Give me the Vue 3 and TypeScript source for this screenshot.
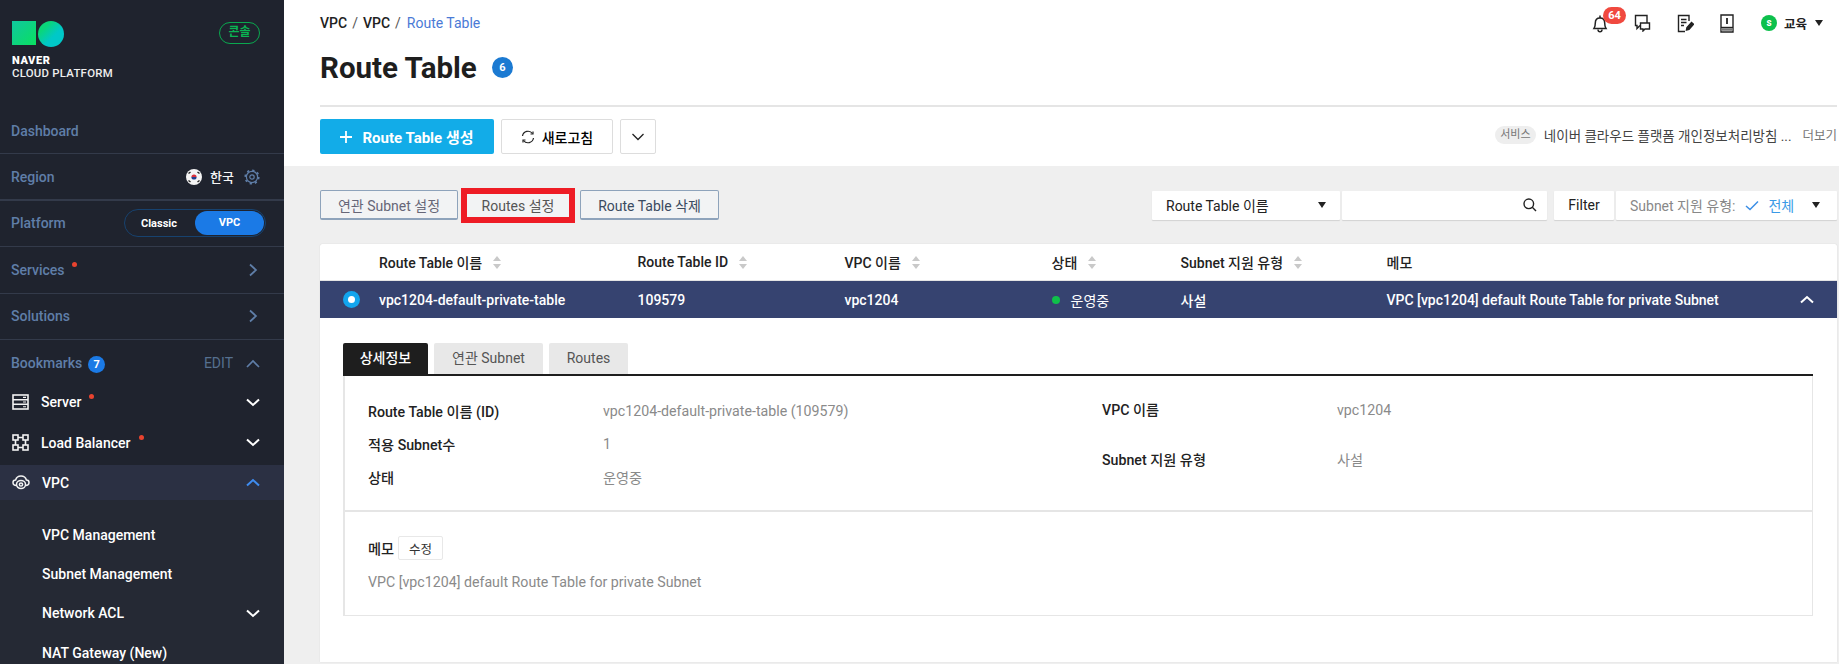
<script setup lang="ts">
interface Col { label: string; sort: boolean }
const cols: Col[] = [
  { label: 'Route Table 이름', sort: true },
  { label: 'Route Table ID', sort: true },
  { label: 'VPC 이름', sort: true },
  { label: '상태', sort: true },
  { label: 'Subnet 지원 유형', sort: true },
  { label: '메모', sort: false },
]
const subs: string[] = ['VPC Management', 'Subnet Management']
</script>

<template>
  <div class="page">
    <aside class="side">
      <div class="brand">
        <div>
          <div class="logo"><i class="sq"></i><i class="ci"></i></div>
          <div class="naver">NAVER</div>
          <div class="ncp">CLOUD PLATFORM</div>
        </div>
        <span class="console">콘솔</span>
      </div>
      <div class="row first"><span class="ttl">Dashboard</span></div>
      <div class="row thick">
        <span class="ttl">Region</span>
        <span class="region">
          <svg width="16" height="16" viewBox="0 0 16 16"><circle cx="8" cy="8" r="8" fill="#f4f4f4"/><path d="M5.400 8a2.600 2.600 0 0 1 5.200 0z" fill="#d8313c"/><path d="M5.400 8a2.600 2.600 0 0 0 5.200 0z" fill="#20408f"/><path d="M2.500 4.500l2 -1.500M2.500 11.500l2 1.500M13.500 4.500l-2 -1.500M13.500 11.500l-2 1.500" stroke="#222" stroke-width="1.400"/></svg>
          <b>한국</b>
          <svg width="16" height="16" viewBox="0 0 16 16" fill="none" stroke="#5f7ea8"><circle cx="8" cy="8" r="5.600" stroke-width="1.200"/><circle cx="8" cy="8" r="6.800" stroke-width="1.600" stroke-dasharray="2.300 3.040"/><circle cx="8" cy="8" r="2.200" stroke-width="1.200"/></svg>
        </span>
      </div>
      <div class="row">
        <span class="ttl">Platform</span>
        <span class="toggle"><span class="tg-off">Classic</span><span class="tg-on">VPC</span></span>
      </div>
      <div class="row">
        <span class="ttl">Services<i class="dot d-s"></i></span>
        <svg class="chev" width="10" height="14" viewBox="0 0 10 14" fill="none" stroke="#5f7ea8" stroke-width="1.700"><path d="M2 1.500L8 7l-6 5.500"/></svg>
      </div>
      <div class="row">
        <span class="ttl">Solutions</span>
        <svg class="chev" width="10" height="14" viewBox="0 0 10 14" fill="none" stroke="#5f7ea8" stroke-width="1.700"><path d="M2 1.500L8 7l-6 5.500"/></svg>
      </div>
      <div class="bm">
        <span class="ttl">Bookmarks</span><span class="bm-n">7</span>
        <span class="edit">EDIT</span>
        <svg width="14" height="9" viewBox="0 0 14 9" fill="none" stroke="#5f7ea8" stroke-width="1.700"><path d="M1 8l6-6 6 6"/></svg>
      </div>
      <div class="item it-server">
        <svg width="17" height="16" viewBox="0 0 17 16" fill="none" stroke="#f2f2f2" stroke-width="1.600"><rect x="1" y="1" width="15" height="14"/><path d="M1 5.700h15M1 10.300h15"/><path d="M11 3.400h3M11 8h3M11 12.700h3" stroke-width="1.100"/></svg>
        <span>Server<i class="dot d-a"></i></span>
        <svg class="ch" width="14" height="9" viewBox="0 0 14 9" fill="none" stroke="#fff" stroke-width="2"><path d="M1 1.500l6 5.500 6-5.500"/></svg>
      </div>
      <div class="item it-lb">
        <svg width="17" height="17" viewBox="0 0 17 17" fill="none" stroke="#f2f2f2" stroke-width="1.600"><rect x="1" y="1" width="5" height="5"/><rect x="11" y="1" width="5" height="5"/><rect x="1" y="11" width="5" height="5"/><rect x="11" y="11" width="5" height="5"/><path d="M6 3.500h5M6 13.500h5M3.500 6v5M13.500 6v5"/></svg>
        <span>Load Balancer<i class="dot d-b"></i></span>
        <svg class="ch" width="14" height="9" viewBox="0 0 14 9" fill="none" stroke="#fff" stroke-width="2"><path d="M1 1.500l6 5.500 6-5.500"/></svg>
      </div>
      <div class="item vpc">
        <svg width="18" height="15" viewBox="0 0 18 15" fill="none" stroke="#f2f2f2" stroke-width="1.500"><path d="M4.500 10.500C2 10.500 1 9 1 7.500 1 6 2.200 5 3.600 5 4.300 2.500 6.300 1 9 1s4.700 1.500 5.400 4c1.400 0 2.600 1 2.600 2.500s-1 3-3.500 3"/><ellipse cx="9" cy="9.500" rx="4.500" ry="4"/><circle cx="9" cy="9.500" r="1.600"/></svg>
        <span>VPC</span>
        <svg class="ch" width="14" height="9" viewBox="0 0 14 9" fill="none" stroke="#3f8cf0" stroke-width="2"><path d="M1 7.500l6-5.500 6 5.500"/></svg>
      </div>
      <div class="subs">
        <div v-for="s in subs" :key="s" class="sub">{{ s }}</div>
        <div class="sub">Network ACL
          <svg class="ch" width="14" height="9" viewBox="0 0 14 9" fill="none" stroke="#fff" stroke-width="2"><path d="M1 1.500l6 5.500 6-5.500"/></svg>
        </div>
        <div class="sub">NAT Gateway (New)</div>
      </div>
    </aside>

    <main class="main">
      <section class="head">
        <div class="top">
          <div class="crumb"><b>VPC</b><em>/</em><b>VPC</b><em>/</em><span>Route Table</span></div>
          <div class="tools">
            <span class="bell">
              <svg width="16" height="19" viewBox="0 0 16 19" fill="none" stroke="#222" stroke-width="1.500"><path d="M2 14.500c1-1.500 1.300-3 1.300-5.500 0-3 1.900-5 4.700-5s4.700 2 4.700 5c0 2.500.3 4 1.300 5.500z"/><path d="M8 1.500v2.500M6 15.500c0 1.500 1 2.300 2 2.300s2-.8 2-2.300"/></svg>
              <i class="bell-n">64</i>
            </span>
            <svg width="17" height="18" viewBox="0 0 17 18" fill="none" stroke="#222" stroke-width="1.400"><path d="M13 9V1.500H1.500v10H3v3l3-3"/><path d="M6.500 9h9v6h-4.500l-2 2v-2H6.500z"/></svg>
            <svg width="17" height="19" viewBox="0 0 17 19" fill="none" stroke="#222" stroke-width="1.400"><path d="M12 7V1.500H1.500v16H8"/><path d="M4 5.500h5.500M4 8.500h5.500M4 11.500h3"/><path d="M9.500 16l.5-2.500 4.500-5 2 1.800-4.500 5z" fill="#222"/></svg>
            <svg width="14" height="19" viewBox="0 0 14 19" fill="none" stroke="#222" stroke-width="1.400"><path d="M1 1h12v17H1z"/><path d="M1 13.500h12"/><path d="M1 15.500h12" stroke-width="2.500" stroke="#777"/><path d="M7 4v6" stroke-width="1.800"/></svg>
            <span class="user"><i class="s">s</i><b>교육</b><i class="caret dk"></i></span>
          </div>
        </div>
        <div class="title"><h1>Route Table</h1><span class="count">6</span></div>
        <div class="acts">
          <button class="b-create">
            <svg width="12" height="12" viewBox="0 0 12 12" stroke="#fff" stroke-width="1.800"><path d="M6 0v12M0 6h12"/></svg>
            Route Table 생성
          </button>
          <button class="b-refresh">
            <svg width="14" height="14" viewBox="0 0 14 14" fill="none" stroke="#222" stroke-width="1.200"><path d="M1.500 6A5.600 5.600 0 0 1 11.500 3.500M12.500 8A5.600 5.600 0 0 1 2.500 10.500"/><path d="M9.500 4h2.500V1.500M4.500 10H2v2.500"/></svg>
            새로고침
          </button>
          <button class="b-more">
            <svg width="14" height="8" viewBox="0 0 14 8" fill="none" stroke="#222" stroke-width="1.300"><path d="M1.500 1l5.500 5.500L12.500 1"/></svg>
          </button>
          <div class="notice"><span class="pill">서비스</span><span class="ntxt">네이버 클라우드 플랫폼 개인정보처리방침 ...</span><span class="nmore">더보기</span></div>
        </div>
      </section>

      <section class="body">
        <div class="bar">
          <button class="b-ol dim">연관 Subnet 설정</button>
          <button class="b-routes">Routes 설정</button>
          <button class="b-ol">Route Table 삭제</button>
          <div class="search">
            <div class="sel">Route Table 이름<i class="caret dk"></i></div>
            <div class="inp">
              <svg width="14" height="14" viewBox="0 0 14 14" fill="none" stroke="#222" stroke-width="1.400"><circle cx="5.800" cy="5.800" r="4.800"/><path d="M9.300 9.300L13 13"/></svg>
            </div>
            <div class="fil">Filter</div>
            <div class="fsel"><span class="fl">Subnet 지원 유형:</span>
              <svg width="14" height="11" viewBox="0 0 14 11" fill="none" stroke="#3a8ee6" stroke-width="1.500"><path d="M1 6l4 3.500L13 1.500"/></svg>
              <span class="fv">전체</span><i class="caret dk"></i></div>
          </div>
        </div>

        <div class="card">
          <div class="thead">
            <span></span>
            <span v-for="c in cols" :key="c.label" class="th">{{ c.label }}
              <svg v-if="c.sort" width="10" height="13" viewBox="0 0 10 13" fill="#c9c9c9"><path d="M5 0l4 5H1zM5 13l4-5H1z"/></svg>
            </span>
          </div>
          <div class="tr">
            <span class="radio"><i></i></span>
            <span>vpc1204-default-private-table</span>
            <span>109579</span>
            <span>vpc1204</span>
            <span class="st"><i></i>운영중</span>
            <span>사설</span>
            <span class="memo">VPC [vpc1204] default Route Table for private Subnet
              <svg width="14" height="9" viewBox="0 0 14 9" fill="none" stroke="#fff" stroke-width="2"><path d="M1 7.500l6-5.500 6 5.500"/></svg>
            </span>
          </div>
          <div class="detail">
            <div class="tabs">
              <span class="tab on">상세정보</span>
              <span class="tab t2">연관 Subnet</span>
              <span class="tab t3">Routes</span>
            </div>
            <div class="panel">
              <div class="info">
                <div class="ic ic-l">
                  <div class="kv"><b>Route Table 이름 (ID)</b><span>vpc1204-default-private-table (109579)</span></div>
                  <div class="kv"><b>적용 Subnet수</b><span>1</span></div>
                  <div class="kv"><b>상태</b><span>운영중</span></div>
                </div>
                <div class="ic ic-r">
                  <div class="kv2"><b>VPC 이름</b><span>vpc1204</span></div>
                  <div class="kv2"><b>Subnet 지원 유형</b><span>사설</span></div>
                </div>
              </div>
              <div class="mm">
                <div class="mm-h"><b>메모</b><button>수정</button></div>
                <p>VPC [vpc1204] default Route Table for private Subnet</p>
              </div>
            </div>
          </div>
        </div>
      </section>
    </main>
  </div>
</template>

<style>
html, body { margin: 0; height: 100%; overflow: hidden; }
</style>

<style scoped>
* { box-sizing: border-box; }
.page { display: flex; width: 1839px; height: 664px; overflow: hidden; font-family: Roboto, "Noto Sans CJK KR", sans-serif; font-size: 14px; color: #222; }
.side { width: 284px; flex: none; background: #1f232e; color: #fff; height: 664px; overflow: hidden; }
.brand { height: 108px; padding: 21px 24px 0 12px; display: flex; justify-content: space-between; align-items: flex-start; }
.logo { display: flex; gap: 2px; height: 26px; margin-bottom: 7px; }
.sq { width: 24px; height: 24px; background: linear-gradient(135deg, #10c7a0, #0ae060); }
.ci { width: 26px; height: 26px; border-radius: 50%; background: linear-gradient(135deg, #0ad67a 25%, #00c8c8 60%); }
.naver { font-size: 11px; font-weight: 900; line-height: 13px; letter-spacing: .6px; }
.ncp { font-size: 11.400px; font-weight: 500; line-height: 12px; letter-spacing: .25px; color: #eee; }
.console { width: 41px; height: 22px; margin-top: 1px; border: 1.500px solid #0aa84f; border-radius: 11px; color: #0ab553; font-size: 12px; font-weight: 700; line-height: 19px; text-align: center; }
.row { height: 46.500px; border-bottom: 1px solid #333a4a; padding: 0 24px 0 11px; display: flex; align-items: center; justify-content: space-between; }
.row.first { height: 46px; }
.row.thick { border-bottom-width: 2px; padding-top: 1px; }
.ttl { color: #5f7ea8; font-size: 14px; font-weight: 500; position: relative; }
.region { display: flex; align-items: center; font-size: 13px; }
.region b { font-weight: 500; margin: 0 10px 0 8px; color: #f5f5f5; }
.toggle { width: 142px; height: 28px; margin-right: -6px; border: 1px solid #17426f; border-radius: 14px; display: flex; align-items: center; padding: 1px; font-size: 11px; font-weight: 700; }
.tg-off { flex: 1; text-align: center; padding-right: 3px; }
.tg-on { width: 69px; height: 24px; border-radius: 12px; background: #1b7ae6; text-align: center; line-height: 24px; }
.chev { margin-right: 2px; }
.dot { position: absolute; width: 5px; height: 5px; border-radius: 50%; background: #e8432f; }
.d-s { left: 61px; top: 0px; }
.d-a { left: 48px; top: 0; }
.d-b { left: 98px; top: 0; }
.bm { height: 42px; padding: 4px 24px 0 11px; display: flex; align-items: center; }
.bm-n { width: 17px; height: 17px; border-radius: 50%; background: #1b7ae6; font-size: 11px; font-weight: 700; line-height: 17px; text-align: center; margin-left: 6px; margin-top: 2px; }
.edit { margin-left: auto; margin-right: 13px; color: #56708f; font-size: 14px; }
.item { display: flex; align-items: center; padding: 0 24px 0 12px; gap: 12px; font-size: 14px; font-weight: 500; }
.item span { position: relative; }
.item .ch { margin-left: auto; }
.it-server { height: 40px; }
.it-lb { height: 41px; }
.vpc { height: 35px; margin-top: 2px; background: #2b3043; }
.subs { background: #252934; height: 210px; padding-top: 15px; font-weight: 500; }
.sub { height: 39.300px; display: flex; align-items: center; padding: 0 24px 0 42px; font-size: 14px; }
.sub .ch { margin-left: auto; }

.main { flex: 1; min-width: 0; background: #efefef; }
.head { height: 166px; background: #fff; padding: 0 2px 0 36px; }
.top { height: 46px; display: flex; justify-content: space-between; align-items: center; }
.crumb { font-size: 14px; display: flex; align-items: center; }
.crumb b { font-weight: 500; }
.crumb em { font-style: normal; margin: 0 5px; color: #555; }
.crumb span { color: #4a7ad6; margin-left: 1px; }
.tools { display: flex; align-items: center; gap: 26px; padding-right: 14px; }
.bell { position: relative; display: block; height: 19px; }
.bell-n { position: absolute; left: 11px; top: -7px; width: 23px; height: 17px; border-radius: 9px; background: #f0493f; color: #fff; font-size: 11px; font-style: normal; font-weight: 700; text-align: center; line-height: 17px; }
.user { display: flex; align-items: center; gap: 7px; font-size: 12.500px; margin-left: 1px; }
.user b { font-weight: 700; }
.s { width: 16px; height: 16px; border-radius: 50%; background: #0dc04c; color: #fff; font-size: 10px; font-style: normal; font-weight: 700; text-align: center; line-height: 15px; }
.caret { display: inline-block; width: 0; height: 0; border-left: 4px solid transparent; border-right: 4px solid transparent; border-top: 6px solid #222; }
.user .caret { margin-left: 1px; }
.title { height: 61px; border-bottom: 2px solid #e5e5e5; display: flex; align-items: center; padding-bottom: 16px; margin-bottom: 12px; }
.title h1 { margin: 0; font-size: 29.500px; font-weight: 700; color: #1e1e1e; }
.count { width: 21px; height: 21px; border-radius: 50%; background: #1b7ad2; color: #fff; font-size: 11px; font-weight: 700; line-height: 21px; text-align: center; margin-left: 15px; }
.acts { display: flex; align-items: center; gap: 7px; height: 35px; }
button { font-family: inherit; cursor: pointer; }
.acts button { height: 35px; border-radius: 2px; border: 1px solid #ddd; background: #fff; display: flex; align-items: center; justify-content: center; font-size: 14px; padding: 0; }
.acts .b-create { width: 174px; background: #12ace8; border: 0; color: #fff; font-weight: 700; font-size: 15px; gap: 10px; }
.acts .b-refresh { width: 112px; gap: 7px; font-weight: 500; }
.acts .b-more { width: 36px; }
.notice { margin-left: auto; display: flex; align-items: center; font-size: 13.500px; color: #444; padding-bottom: 4px; }
.pill { background: #eee; border-radius: 9px; width: 41px; height: 18px; line-height: 17px; text-align: center; font-size: 11px; color: #777; margin-right: 8px; }
.nmore { margin-left: 11px; color: #777; font-size: 12.500px; white-space: nowrap; }
.body { padding: 24px 2px 0 36px; }
.bar { display: flex; align-items: center; height: 30px; margin-bottom: 24px; }
.bar button { height: 30px; border: 1px solid #8ea3bb; border-bottom-width: 2px; background: #f2f3f4; border-radius: 2px; font-size: 14px; color: #3a4a60; padding: 0; }
.b-ol { width: 138px; }
.b-ol:nth-child(3) { width: 139px; margin-left: 5px; }
.b-ol.dim { color: #667 !important; }
.bar .b-routes { width: 114px; height: 35px; margin-left: 3px; border: 6px solid #ee1c25; border-radius: 0; background: #f2f3f4; color: #555; }
.search { margin-left: auto; display: flex; height: 29px; font-size: 14px; margin-right: 0; }
.search > div { background: #fff; box-shadow: 0 1px 1px rgba(0,0,0,.12); border-radius: 1px; display: flex; align-items: center; }
.sel { width: 188px; padding: 0 14px; justify-content: space-between; margin-right: 2px; }
.inp { width: 205px; justify-content: flex-end; padding-right: 10px; margin-right: 7px; }
.fil { width: 60px; justify-content: center; margin-right: 2px; }
.fsel { width: 221px; padding: 0 17px 0 14px; }
.fl { color: #888; margin-right: 10px; }
.fv { color: #3a9ae6; margin-left: 9px; margin-right: auto; }
.card { background: #fff; height: 418px; box-shadow: 0 0 1px rgba(0,0,0,.2); border-radius: 2px 2px 0 0; }
.thead, .tr { display: grid; grid-template-columns: 59px 258.500px 207px 207px 129px 206px 1fr; align-items: center; }
.thead { height: 37px; border-bottom: 1px solid #e4e4e4; font-weight: 500; font-size: 14px; }
.th { display: flex; align-items: center; gap: 10px; }
.tr { height: 37px; background: #364370; color: #fff; font-size: 14px; font-weight: 500; }
.radio { padding-left: 23px; display: flex; }
.radio i { width: 17px; height: 17px; border-radius: 50%; background: #12a5ee; border: 0; display: flex; align-items: center; justify-content: center; }
.radio i::after { content: ""; width: 7px; height: 7px; border-radius: 50%; background: #fff; }
.st { display: flex; align-items: center; gap: 11px; font-weight: 400; }
.st i { width: 8px; height: 8px; border-radius: 50%; background: #0fc04a; }
.memo { display: flex; justify-content: space-between; align-items: center; padding-right: 23px; }
.detail { padding: 25px 24px 0 23px; }
.tabs { display: flex; gap: 6px; height: 33px; border-bottom: 2px solid #1e1e1e; }
.tab { height: 31px; width: 85px; background: #e8e8e8; border-radius: 2px 2px 0 0; text-align: center; line-height: 31px; font-size: 14px; color: #555; }
.tab.on { background: #1e1e1e; color: #fff; font-weight: 500; }
.t2 { width: 109px; }
.t3 { width: 79px; }
.panel { height: 240px; border: 1px solid #e6e6e6; border-left-width: 2px; border-top: 0; }
.info { height: 136px; border-bottom: 2px solid #e5e5e5; display: flex; padding: 18px 0 0 23px; }
.ic { font-size: 14.200px; }
.ic b { font-weight: 500; }
.ic span { color: #8a8a8a; }
.ic-l { width: 734px; }
.kv { display: grid; grid-template-columns: 235px 1fr; height: 33px; align-items: center; }
.kv2 { display: grid; grid-template-columns: 235px 1fr; height: 50px; line-height: 33px; }
.mm { padding: 24px 23px; font-size: 14.200px; }
.mm-h { display: flex; align-items: center; gap: 4px; height: 24px; }
.mm-h b { font-weight: 500; }
.mm-h button { width: 45px; height: 24px; border: 1px solid #e8e8e8; border-radius: 2px; background: #fff; font-size: 12.500px; color: #333; padding: 0; }
.mm p { margin: 12px 0 0; color: #8a8a8a; line-height: 20px; }
</style>
